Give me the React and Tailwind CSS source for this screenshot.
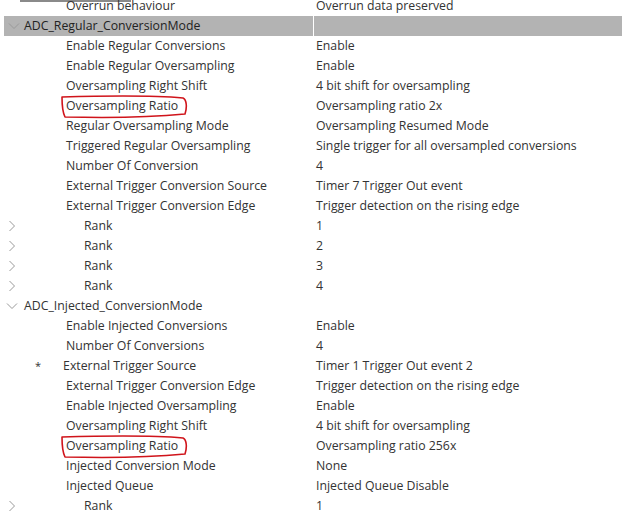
const ROWS = [
  { label: 'Overrun behaviour', value: 'Overrun data preserved', pad: 'pl-[46px]' },
  { label: 'ADC_Regular_ConversionMode', group: true },
  { label: 'Enable Regular Conversions', value: 'Enable', pad: 'pl-[46px]' },
  { label: 'Enable Regular Oversampling', value: 'Enable', pad: 'pl-[46px]' },
  { label: 'Oversampling Right Shift', value: '4 bit shift for oversampling', pad: 'pl-[46px]' },
  { label: 'Oversampling Ratio', value: 'Oversampling ratio 2x', pad: 'pl-[46px]', mark: true },
  { label: 'Regular Oversampling Mode', value: 'Oversampling Resumed Mode', pad: 'pl-[46px]' },
  { label: 'Triggered Regular Oversampling', value: 'Single trigger for all oversampled conversions', pad: 'pl-[46px]' },
  { label: 'Number Of Conversion', value: '4', pad: 'pl-[46px]' },
  { label: 'External Trigger Conversion Source', value: 'Timer 7 Trigger Out event', pad: 'pl-[46px]' },
  { label: 'External Trigger Conversion Edge', value: 'Trigger detection on the rising edge', pad: 'pl-[46px]' },
  { label: 'Rank', value: '1', pad: 'pl-[64px]', chevron: 'closed' },
  { label: 'Rank', value: '2', pad: 'pl-[64px]', chevron: 'closed' },
  { label: 'Rank', value: '3', pad: 'pl-[64px]', chevron: 'closed' },
  { label: 'Rank', value: '4', pad: 'pl-[64px]', chevron: 'closed' },
  { label: 'ADC_Injected_ConversionMode', pad: 'pl-[4px]', chevron: 'open' },
  { label: 'Enable Injected Conversions', value: 'Enable', pad: 'pl-[46px]' },
  { label: 'Number Of Conversions', value: '4', pad: 'pl-[46px]' },
  { label: 'External Trigger Source', value: 'Timer 1 Trigger Out event 2', pad: 'pl-[22px]', star: true },
  { label: 'External Trigger Conversion Edge', value: 'Trigger detection on the rising edge', pad: 'pl-[46px]' },
  { label: 'Enable Injected Oversampling', value: 'Enable', pad: 'pl-[46px]' },
  { label: 'Oversampling Right Shift', value: '4 bit shift for oversampling', pad: 'pl-[46px]' },
  { label: 'Oversampling Ratio', value: 'Oversampling ratio 256x', pad: 'pl-[46px]', mark: true },
  { label: 'Injected Conversion Mode', value: 'None', pad: 'pl-[46px]' },
  { label: 'Injected Queue', value: 'Injected Queue Disable', pad: 'pl-[46px]' },
  { label: 'Rank', value: '1', pad: 'pl-[64px]', chevron: 'closed' },
]

function Chevron({ kind }) {
  if (kind === 'open') {
    return (
      <svg width="12" height="8" viewBox="0 0 12 8">
        <path d="M1 1.5 L6 6.5 L11 1.5" fill="none" stroke="#9a9a9a" strokeWidth="1" />
      </svg>
    )
  }
  if (kind === 'closed') {
    return (
      <svg width="8" height="12" viewBox="0 0 8 12" className="ml-[2px]">
        <path d="M1.5 1 L6.5 6 L1.5 11" fill="none" stroke="#9a9a9a" strokeWidth="1" />
      </svg>
    )
  }
  return null
}

// hand-drawn red outline around a label
function RedMark() {
  return (
    <svg width="132" height="26" viewBox="0 0 132 26" className="pointer-events-none absolute left-[-7px] top-[-3px]">
      <path
        d="M3 3 C40 2 90 1 124 4 C128 6 128 14 126 20 C95 23 45 24 6 23 C3 17 3 9 3 3 Z"
        fill="none"
        stroke="#d0141b"
        strokeWidth="1.6"
        strokeLinejoin="round"
      />
    </svg>
  )
}

function Row({ r }) {
  if (r.group) {
    return (
      <div className="flex h-5 gap-px pl-1 text-[12.3px] leading-5 text-[#222]">
        <div className="flex w-[309px] items-center bg-[#b3b3b3]">
          <div className="flex w-5 justify-center">
            <Chevron kind="open" />
          </div>
          <span className="whitespace-nowrap">{r.label}</span>
        </div>
        <div className="flex-1 bg-[#b3b3b3]" />
      </div>
    )
  }
  return (
    <div className="flex h-5 text-[12.3px] leading-5 text-[#333]">
      <div className="flex w-[314px] shrink-0 items-center">
        <div className={'flex w-5 ' + (r.chevron === 'open' ? 'justify-center pl-1' : 'pl-[6px]')}>
          <Chevron kind={r.chevron} />
        </div>
        {r.star ? <span className="pl-[15px] text-[11px]">*</span> : null}
        <span className={'whitespace-nowrap ' + r.pad}>
          <span className="relative">
            {r.label}
            {r.mark ? <RedMark /> : null}
          </span>
        </span>
      </div>
      <div className="whitespace-nowrap pl-[2px]">{r.value}</div>
    </div>
  )
}

export default function App() {
  return (
    <div
      className="relative h-[518px] w-[622px] overflow-hidden bg-white"
      style={{ fontFamily: '"Open Sans", "Noto Sans", sans-serif' }}
    >
      {/* thin scroll-position line at the top edge */}
      <div className="absolute left-[20px] top-0 h-[2px] w-[111px] bg-[#8a8a8a]" />
      <div className="-mt-1">
        {ROWS.map((r, i) => (
          <Row key={i} r={r} />
        ))}
      </div>
    </div>
  )
}
